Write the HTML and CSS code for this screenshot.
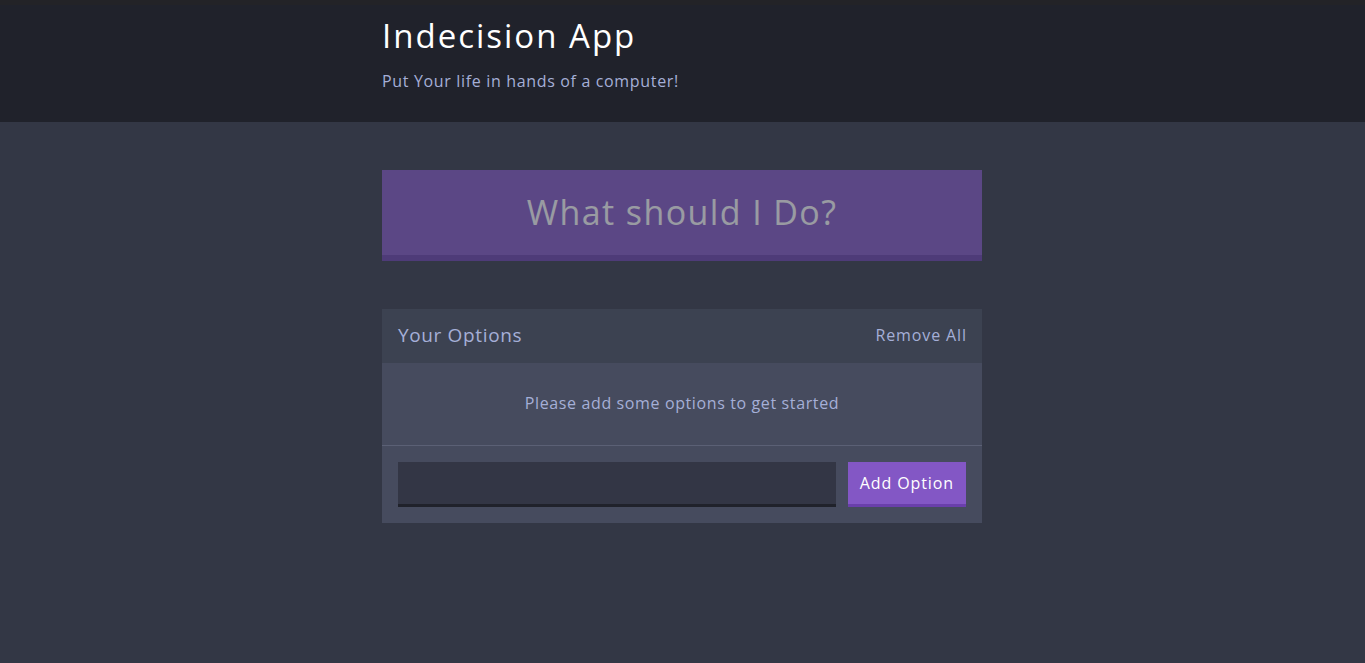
FILE: index.html
```html
<!DOCTYPE html>
<html lang="en">
<head>
<meta charset="utf-8">
<title>Indecision App</title>
<link rel="stylesheet" href="styles.css">
</head>
<body>
<header class="header">
  <div class="container">
    <h1 class="header__title">Indecision App</h1>
    <h2 class="header__subtitle">Put Your life in hands of a computer!</h2>
  </div>
</header>
<main class="container main">
  <button class="big-button" disabled>What should I Do?</button>
  <div class="widget">
    <div class="widget-header">
      <h3 class="widget-header__title">Your Options</h3>
      <button class="button button--link">Remove All</button>
    </div>
    <p class="widget__message">Please add some options to get started</p>
    <form class="add-option">
      <input class="add-option__input" type="text" name="option">
      <button class="button" type="button">Add Option</button>
    </form>
  </div>
</main>
</body>
</html>
```

FILE: styles.css
```css
* { box-sizing: border-box; }
html, body { margin: 0; padding: 0; }
body {
  background: #333745;
  font-family: "Open Sans", "Noto Sans", sans-serif;
  color: #ffffff;
  min-height: 663px;
}
.container {
  width: 601px;
  padding-right: 1px;
  margin: 0 auto;
}
.header {
  background: #20222b;
  border-top: 5px solid #232327;
  height: 122px;
  padding-top: 11px;
}
.header__title {
  margin: 0;
  font-size: 33px;
  font-weight: 500;
  line-height: 40px;
  letter-spacing: 2px;
  color: #ffffff;
}
.header__subtitle {
  margin: 15px 0 0;
  font-size: 16px;
  font-weight: 400;
  line-height: 20px;
  letter-spacing: 0.66px;
  color: #a5afd7;
}
.main { padding-top: 48px; }
.big-button {
  display: block;
  width: 100%;
  height: 91px;
  margin: 0 0 48px;
  padding: 0 0 2px;
  background: #8357c5;
  border: none;
  border-bottom: 6px solid #6a3fab;
  color: #ffffff;
  font-family: inherit;
  font-size: 34px;
  font-weight: 500;
  letter-spacing: 1.4px;
  opacity: 0.5;
}
.widget { background: #464b5e; }
.widget-header {
  background: #3c4251;
  height: 54px;
  padding: 0 16px 2px;
  display: flex;
  align-items: center;
  justify-content: space-between;
}
.widget-header__title {
  margin: 0;
  font-size: 19px;
  font-weight: 400;
  letter-spacing: 0.64px;
  color: #a5afd7;
}
.button {
  background: #8357c5;
  border: none;
  border-bottom: 3px solid #6a3fab;
  color: #ffffff;
  font-family: inherit;
  font-size: 16px;
  font-weight: 500;
  letter-spacing: 0.9px;
  padding: 0 12px;
  height: 45px;
}
.button--link {
  background: none;
  border: none;
  color: #a5afd7;
  padding: 0;
  height: auto;
  font-weight: 400;
  margin-right: -1px;
}
.widget__message {
  margin: 0;
  height: 83px;
  padding-bottom: 2px;
  border-bottom: 1px solid #5b6075;
  display: flex;
  align-items: center;
  justify-content: center;
  color: #a5afd7;
  font-size: 16px;
  letter-spacing: 0.62px;
}
.add-option {
  display: flex;
  padding: 16px;
  margin: 0;
}
.add-option__input {
  flex-grow: 1;
  height: 45px;
  margin-right: 12px;
  background: #333645;
  border: none;
  border-bottom: 3px solid #20222b;
  color: #a5afd7;
  padding: 12px;
  font-family: inherit;
}
```
